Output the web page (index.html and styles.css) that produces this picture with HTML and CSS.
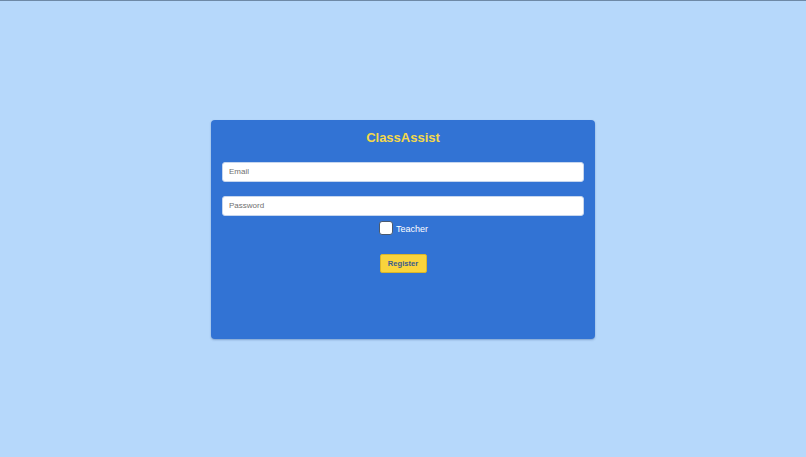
FILE: index.html
```html
<!DOCTYPE html>
<html>
<head>
<meta charset="utf-8">
<title>ClassAssist</title>
<link rel="stylesheet" href="styles.css">
</head>
<body>
<main class="page">
  <form class="card">
    <h1 class="title">ClassAssist</h1>
    <input class="field field-email" type="email" placeholder="Email">
    <input class="field field-password" type="password" placeholder="Password">
    <label class="check-row">
      <span class="box"></span>
      <span class="check-label">Teacher</span>
    </label>
    <button class="btn" type="button">Register</button>
  </form>
</main>
</body>
</html>
```
FILE: styles.css
```css
* { box-sizing: border-box; }
html, body { margin: 0; padding: 0; height: 100%; }
body {
  background: #b6d8fb;
  border-top: 1px solid #6e89a6;
  font-family: "Liberation Sans", Arial, sans-serif;
}
.page {
  height: 456px;
  display: flex;
  align-items: center;
  justify-content: center;
}
.card {
  width: 384px;
  height: 219px;
  background: #3273d4;
  border-radius: 4px;
  box-shadow: 0 1px 2px rgba(30, 60, 120, 0.35);
  padding: 9px 11px 0;
  display: flex;
  flex-direction: column;
  align-items: center;
}
.title {
  margin: 0;
  font-size: 13px;
  line-height: 17px;
  font-weight: bold;
  color: #f4d94a;
}
.field {
  width: 100%;
  height: 20px;
  margin: 0;
  border: 1px solid #c6d6ee;
  border-radius: 3px;
  background: #fff;
  padding: 0 6px;
  font-family: "Liberation Sans", Arial, sans-serif;
  font-size: 8px;
  outline: none;
}
.field::placeholder { color: #6f6f6f; }
.field-email { margin-top: 16px; }
.field-password { margin-top: 14px; }
.check-row {
  margin-top: 5px;
  height: 14px;
  display: flex;
  align-items: center;
  gap: 3px;
  padding-left: 1px;
}
.box {
  width: 14px;
  height: 14px;
  background: #fff;
  border: 1px solid #4a5a70;
  border-radius: 3px;
}
.check-label {
  color: #fff;
  font-size: 9px;
  line-height: 14px;
  position: relative;
  top: 1px;
}
.btn {
  margin-top: 19px;
  width: 47px;
  height: 19px;
  border: 1px solid #d9b52a;
  border-radius: 2px;
  background: #f9d43c;
  color: #3b5c8c;
  font-family: "Liberation Sans", Arial, sans-serif;
  font-size: 7.6px;
  font-weight: bold;
  padding: 0;
}
```
